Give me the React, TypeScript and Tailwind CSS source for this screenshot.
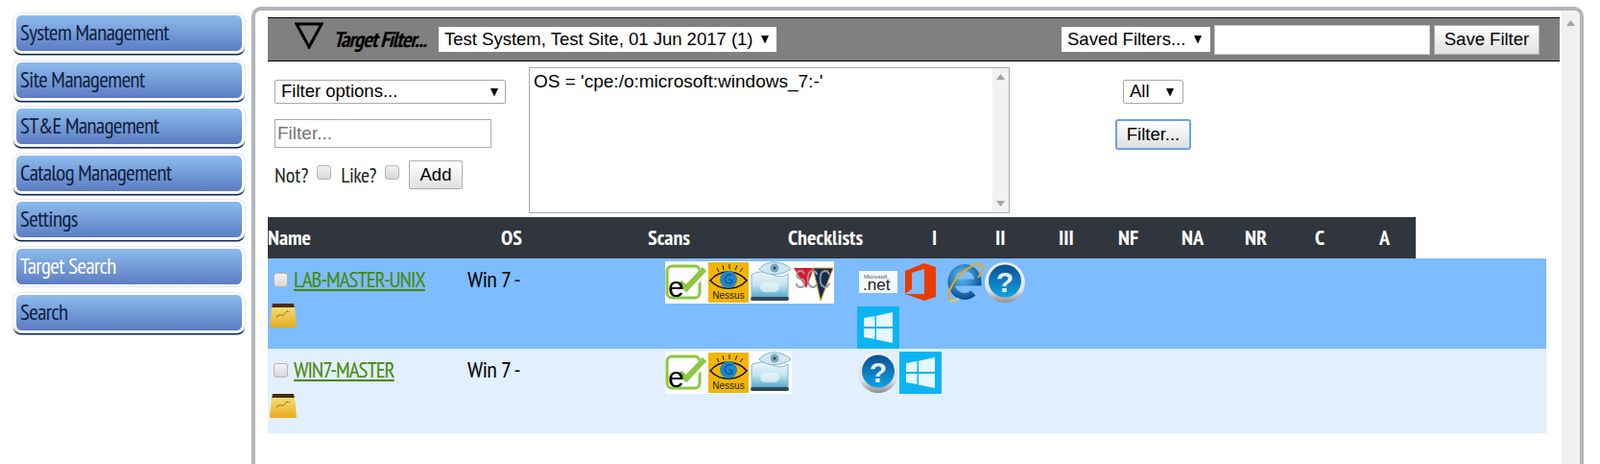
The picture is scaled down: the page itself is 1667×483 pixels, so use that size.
const navItems = ["System Management", "Site Management", "ST&E Management", "Catalog Management", "Settings", "Target Search", "Search"];

const headerCols = ["Name", "OS", "Scans", "Checklists", "I", "II", "III", "NF", "NA", "NR", "C", "A"];

const narrow = "[font-family:'Liberation_Sans_Narrow','PT_Sans_Narrow','Roboto_Condensed',sans-serif]";

const EChecklistIcon = () => (
  <svg width="44" height="44" viewBox="0 0 44 44" className="block bg-white">
    <rect x="2" y="5" width="34" height="33" rx="5" fill="none" stroke="#8cc63f" strokeWidth="3" />
    <path d="M14 23 L22 30 L42 9" fill="none" stroke="#fff" strokeWidth="9" />
    <path d="M15 22 L22 28 L41 8" fill="none" stroke="#8cc63f" strokeWidth="6" />
    <text x="3" y="37" fontSize="30" fill="#000" fontFamily="Liberation Sans">e</text>
  </svg>
);

const NessusIcon = () => (
  <svg width="44" height="44" viewBox="0 0 44 44" className="block bg-white">
    <rect x="1" y="1" width="42" height="42" fill="#f2b600" />
    <path d="M12 11 L10 7 M17 9 L16 4 M23 8 L23 3 M29 9 L31 4 M34 11 L37 7" stroke="#222" strokeWidth="1" />
    <path d="M3 20 C13 8 31 8 41 20 C31 31 13 31 3 20 Z" fill="#f2b600" stroke="#111" strokeWidth="1.5" />
    <circle cx="22" cy="19" r="9" fill="#1f86cc" />
    <path d="M22 19 a3 3 0 0 1 4 3 a5 5 0 0 1 -8 -3 a6 6 0 0 1 8 -5" fill="none" stroke="#0b4e86" strokeWidth="1.2" />
    <text x="22" y="39" fontSize="10" textAnchor="middle" fill="#222" fontFamily="Liberation Sans">Nessus</text>
  </svg>
);

const EyeGlassIcon = () => (
  <svg width="44" height="44" viewBox="0 0 44 44" className="block">
    <defs>
      <linearGradient id="glass" x1="0" y1="0" x2="0" y2="1">
        <stop offset="0" stopColor="#eef6f9" />
        <stop offset="0.5" stopColor="#c4e4ef" />
        <stop offset="1" stopColor="#4fa6ca" />
      </linearGradient>
    </defs>
    <rect width="44" height="44" fill="#fff" />
    <path d="M2 14 C10 9 20 11 26 15 C32 17 38 15 40 13 V38 H2 Z" fill="url(#glass)" stroke="#7fb7cf" strokeWidth="1" />
    <rect x="11" y="22" width="20" height="10" rx="5" fill="#eaf6fa" opacity="0.7" />
    <rect x="1" y="37" width="40" height="4" rx="2" fill="#2f4a55" />
    <path d="M10 8 C18 -2 34 -1 43 8 C34 15 18 16 10 8 Z" fill="#cfe7f3" stroke="#79b4d4" strokeWidth="1" />
    <circle cx="26" cy="7" r="4.5" fill="#7fa7bd" />
    <circle cx="26" cy="7" r="1.6" fill="#2c4a5c" />
  </svg>
);

const SccIcon = () => (
  <svg width="44" height="44" viewBox="0 0 44 44" className="block bg-white">
    <path d="M2 7 H23 L15 28 Z" fill="#e2132c" />
    <path d="M22 7 H43 L30 41 Z" fill="#0e2d54" stroke="#e3a21a" strokeWidth="1" />
    <text transform="translate(3 28) scale(0.66 1)" fontSize="27" fill="#9a9a9a" fontFamily="Liberation Sans">SCC</text>
  </svg>
);

const DotNetIcon = () => (
  <svg width="44" height="44" viewBox="0 0 44 44" className="block">
    <rect x="2" y="10" width="40" height="23" fill="#fff" opacity="0.92" />
    <text x="7" y="18" fontSize="6" fill="#555" fontFamily="Liberation Sans">Microsoft</text>
    <text x="6" y="30" fontSize="17" fill="#222" fontFamily="Liberation Sans">.net</text>
  </svg>
);

const OfficeIcon = () => (
  <svg width="44" height="44" viewBox="0 0 44 44" className="block">
    <path fillRule="evenodd" fill="#eb3c00" d="M6 34 V10 L26 2 L38 6 V37 L26 41 Z M26 8 L13 12 V29 L6 34 L26 34 Z" />
  </svg>
);

const IeIcon = () => (
  <svg width="44" height="44" viewBox="0 0 44 44" className="block">
    <defs>
      <radialGradient id="ie" cx="0.4" cy="0.3" r="0.8">
        <stop offset="0" stopColor="#5cc2ee" />
        <stop offset="1" stopColor="#0a4f98" />
      </radialGradient>
    </defs>
    <path d="M11 22 H38 A14 15 0 1 0 33 33" fill="none" stroke="url(#ie)" strokeWidth="7" />
    <path d="M9 41 C2 30 22 6 38 3 C45 2 43 10 38 17" fill="none" stroke="#e8a820" strokeWidth="2" />
    <path d="M9 41 C11 42 14 41 18 39" fill="none" stroke="#e8c860" strokeWidth="2" />
  </svg>
);

const HelpIcon = () => (
  <svg width="44" height="44" viewBox="0 0 44 44" className="block">
    <defs>
      <linearGradient id="helpRing" x1="0" y1="0" x2="0" y2="1">
        <stop offset="0" stopColor="#f5f5f5" />
        <stop offset="0.7" stopColor="#e0e0e0" />
        <stop offset="1" stopColor="#8e8e8e" />
      </linearGradient>
      <linearGradient id="helpFill" x1="0" y1="0" x2="0" y2="1">
        <stop offset="0" stopColor="#0b4f96" />
        <stop offset="1" stopColor="#0fa3e6" />
      </linearGradient>
    </defs>
    <circle cx="22" cy="22" r="21" fill="url(#helpRing)" />
    <circle cx="22" cy="20.5" r="17" fill="url(#helpFill)" />
    <text x="22" y="32" fontSize="30" fontWeight="700" textAnchor="middle" fill="#e8eef4" fontFamily="Liberation Sans">?</text>
  </svg>
);

const WindowsIcon = () => (
  <svg width="44" height="44" viewBox="0 0 44 44" className="block">
    <rect width="44" height="44" fill="#0db4f2" />
    <path fill="#e6f7fe" d="M7 12 L18.5 10 V21 H7 Z M20 9.7 L37 6 V21 H20 Z M7 23 H18.5 V34 L7 32 Z M20 23 H37 V38 L20 34.5 Z" />
  </svg>
);

const NoteIcon = () => (
  <svg width="28" height="26" viewBox="0 0 28 26" className="block">
    <defs>
      <linearGradient id="note" x1="0" y1="0" x2="0" y2="1">
        <stop offset="0" stopColor="#f6dd72" />
        <stop offset="1" stopColor="#e6ab1c" />
      </linearGradient>
    </defs>
    <path d="M2 5 L3 0 H25 L26 5 Z" fill="#4b2a0c" />
    <path d="M2 4 H26 L28 24 Q28 25 26 25 H2 Q0 25 0 24 Z" fill="url(#note)" />
    <path d="M7 14 Q10 11 12 12 T16 10 T21 9" fill="none" stroke="#5a4a20" strokeWidth="1" strokeDasharray="2 1" />
  </svg>
);

const Arrow = () => (
  <svg width="10" height="10" viewBox="0 0 10 10" className="shrink-0">
    <path d="M1 1 H9 L5 9.5 Z" fill="#000" />
  </svg>
);

const Select = ({ label, className }: { label: string; className: string }) => (
  <div className={`flex items-center justify-between bg-white text-[18.5px] text-black leading-none ${className}`}>
    <span className="whitespace-nowrap">{label}</span>
    <Arrow />
  </div>
);

const Checkbox = () => (
  <input
    type="checkbox"
    className="appearance-none w-[15px] h-[15px] rounded-[3px] border border-[#b5b5b5] bg-gradient-to-b from-[#f2f2f2] to-[#d8d8d8] shrink-0"
  />
);

const Row = ({ name, bg, h, scans, checks }: { name: string; bg: string; h: string; scans: React.ReactNode; checks: React.ReactNode }) => (
  <div className={`flex ${bg} ${h}`}>
    <div className="w-[208px] shrink-0">
      <div className="flex items-center h-[47px] pb-[2px] pl-[6px] gap-[6px]">
        <Checkbox />
        <a href="#" className={`${narrow} -mt-[2px] text-[23px] tracking-[-1px] text-[#438a00] underline leading-none`}>{name}</a>
      </div>
      <div className="pl-[2px]">
        <NoteIcon />
      </div>
    </div>
    <div className={`w-[206px] shrink-0 h-[43px] flex items-center ${narrow} text-[24px] tracking-[-0.5px] text-black`}>Win 7 -</div>
    <div className="w-[200px] shrink-0 pt-[3px] flex items-start">{scans}</div>
    <div className="w-[200px] shrink-0 pt-[3px] flex flex-wrap content-start gap-y-[3px]">{checks}</div>
  </div>
);

export default function App() {
  return (
    <div className="flex h-[483px] overflow-hidden bg-white [font-family:'Liberation_Sans',Arial,sans-serif]">
      <aside className="w-[262px] shrink-0 pl-[14px] pt-[14px] flex flex-col gap-[7.5px]">
        {navItems.map((item) => {
          const active = item === "Target Search";
          return (
            <div
              key={item}
              className={`w-[241px] h-[41px] shrink-0 rounded-[8px] border-x-[3px] border-y-2 border-white bg-gradient-to-b from-[#8dbcec] to-[#5d7dc3] outline outline-1 outline-[#e3e9f6] flex items-center pl-[4px] ${narrow} text-[23px] tracking-[-0.6px] ${active ? "text-white" : "text-[#10203f] shadow-[0_2.5px_0_#0f2555]"}`}
            >
              {item}
            </div>
          );
        })}
      </aside>

      <main className="mt-[7px] w-[1388px] h-[500px] shrink-0 border-[4px] border-[#b0b5ba] rounded-t-[10px] flex overflow-hidden">
        <div className="w-[1361px] shrink-0 pl-[13px] pr-[2px] pt-[7px]">
          <div className="h-[46px] bg-[#808080] border-y border-black flex items-center">
            <svg width="30" height="28" viewBox="0 0 30 28" className="ml-[28px] -mt-[9px]">
              <path d="M2 2 H28 L15 26 Z" fill="none" stroke="#000" strokeWidth="3" />
            </svg>
            <span className={`${narrow} ml-[10px] w-[110px] text-[23px] tracking-[-1.1px] italic font-bold text-black whitespace-nowrap`}>Target Filter...</span>
            <Select label="Test System, Test Site, 01 Jun 2017 (1)" className="w-[352px] h-[26px] pl-[6px] pr-[7px]" />
            <Select label="Saved Filters..." className="ml-[297px] w-[155px] h-[26px] pl-[6px] pr-[8px]" />
            <input className="ml-[4px] w-[225px] h-[31px] bg-white border border-[#c8c8c8]" />
            <button className="ml-[4px] w-[110px] h-[31px] border border-[#adadad] bg-gradient-to-b from-white to-[#e0e0e0] text-[18.5px] text-black">Save Filter</button>
          </div>

          <div className="h-[162px] flex">
            <div className="ml-[7px] w-[265px] shrink-0 pt-[19px]">
              <Select label="Filter options..." className="w-[241px] h-[25px] px-[6px] border border-[#a9a9a9] rounded-[2px]" />
              <input
                placeholder="Filter..."
                className="mt-[16px] block w-[226px] h-[30px] px-[2px] border border-[#a9a9a9] text-[19px] placeholder:text-[#757575]"
              />
              <div className="mt-[13px] flex items-center h-[30px]">
                <span className={`${narrow} text-[22px] text-[#222]`}>Not?</span>
                <span className="ml-[9px]"><Checkbox /></span>
                <span className={`${narrow} ml-[10px] text-[22px] tracking-[-0.5px] text-[#222]`}>Like?</span>
                <span className="ml-[9px]"><Checkbox /></span>
                <button className="ml-[10px] w-[56px] h-[30px] border border-[#adadad] rounded-[2px] bg-gradient-to-b from-white to-[#e0e0e0] text-[18.5px] text-black">Add</button>
              </div>
            </div>
            <div className="mt-[6px] w-[501px] h-[152px] shrink-0 border border-[#a9a9a9] flex">
              <div className="flex-1 px-[4px] pt-0 text-[19px] text-black whitespace-nowrap">OS = 'cpe:/o:microsoft:windows_7:-'</div>
              <div className="w-[17px] bg-[#f1f1f1] flex flex-col justify-between items-center py-[6px]">
                <svg width="9" height="6" viewBox="0 0 9 6"><path d="M0 6 L4.5 0 L9 6 Z" fill="#a3a3a3" /></svg>
                <svg width="9" height="6" viewBox="0 0 9 6"><path d="M0 0 L4.5 6 L9 0 Z" fill="#a3a3a3" /></svg>
              </div>
            </div>
            <div className="ml-[110px] w-[79px] shrink-0 pt-[19px] flex flex-col items-center">
              <Select label="All" className="w-[63px] h-[25px] pl-[6px] pr-[8px] border border-[#a9a9a9] rounded-[2px]" />
              <button className="mt-[16px] w-[79px] h-[32px] border-2 border-[#6aa2ee] rounded-[3px] bg-gradient-to-b from-white to-[#e0e0e0] text-[18.5px] text-black">Filter...</button>
            </div>
          </div>

          <div className={`w-[1196px] h-[43px] bg-[#31353d] grid grid-cols-[243px_153px_146px_150px_66px_66px_62px_66px_66px_73px_67px_38px] items-center ${narrow} text-[22px] font-bold text-white`}>
            {headerCols.map((col) => (
              <span key={col}>{col}</span>
            ))}
          </div>

          <div className="w-[1332px]">
            <Row
              name="LAB-MASTER-UNIX"
              bg="bg-[#7dbcff]"
              h="h-[94px]"
              scans={<><EChecklistIcon /><NessusIcon /><EyeGlassIcon /><SccIcon /></>}
              checks={<><DotNetIcon /><OfficeIcon /><IeIcon /><HelpIcon /><WindowsIcon /></>}
            />
            <Row
              name="WIN7-MASTER"
              bg="bg-[#e2efff]"
              h="h-[88px]"
              scans={<><EChecklistIcon /><NessusIcon /><EyeGlassIcon /></>}
              checks={<><HelpIcon /><WindowsIcon /></>}
            />
          </div>
        </div>

        <div className="w-[19px] shrink-0 bg-[#f1f1f1] flex justify-center pt-[10px]">
          <svg width="9" height="6" viewBox="0 0 9 6"><path d="M0 6 L4.5 0 L9 6 Z" fill="#a3a3a3" /></svg>
        </div>
      </main>
    </div>
  );
}
